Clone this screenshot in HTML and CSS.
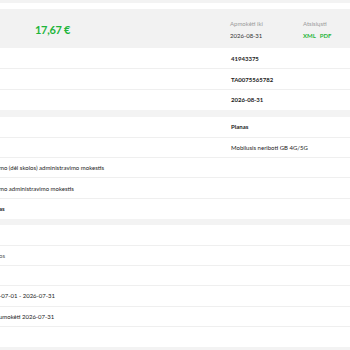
FILE: index.html
```html
<!DOCTYPE html>
<html lang="lt">
<head>
<meta charset="utf-8">
<title>Sąskaita</title>
<link rel="stylesheet" href="styles.css">
</head>
<body>
<div class="topbar"></div>
<section class="summary">
  <div class="price">17,67 €</div>
  <div class="meta">
    <div class="meta-label">Apmokėti iki</div>
    <div class="meta-value">2026-08-31</div>
  </div>
  <div class="meta">
    <div class="meta-label">Atsisiųsti</div>
    <div class="links"><span>XML</span><span>PDF</span></div>
  </div>
</section>

<div class="table first">
  <div class="row"><div class="cell-left"></div><div class="cell-right strong">41943375</div></div>
  <div class="row"><div class="cell-left"></div><div class="cell-right strong">TA0075565782</div></div>
  <div class="row last"><div class="cell-left"></div><div class="cell-right strong">2026-08-31</div></div>
</div>
<div class="band"></div>
<div class="table">
  <div class="row"><div class="cell-left"></div><div class="cell-right strong">Planas</div></div>
  <div class="row"><div class="cell-left"></div><div class="cell-right">Mobilusis neriboti GB 4G/5G</div></div>
  <div class="row"><div class="cell-left cut">mo (dėl skolos) administravimo mokestis</div><div class="cell-right"></div></div>
  <div class="row"><div class="cell-left cut">mo administravimo mokestis</div><div class="cell-right"></div></div>
  <div class="row last"><div class="cell-left cut strong">as</div><div class="cell-right"></div></div>
</div>
<div class="band small"></div>
<div class="table">
  <div class="row"><div class="cell-left"></div><div class="cell-right"></div></div>
  <div class="row"><div class="cell-left cut muted">os</div><div class="cell-right"></div></div>
  <div class="row"><div class="cell-left"></div><div class="cell-right"></div></div>
  <div class="row"><div class="cell-left cut">-07-01 - 2026-07-31</div><div class="cell-right"></div></div>
  <div class="row"><div class="cell-left cut">umokėti 2026-07-31</div><div class="cell-right"></div></div>
  <div class="row last"><div class="cell-left"></div><div class="cell-right"></div></div>
</div>
<div class="band"></div>
</body>
</html>
```
FILE: styles.css
```css
html, body {
  margin: 0;
  padding: 0;
  background: #ffffff;
  overflow: hidden;
}
body {
  font-family: Lato, "Noto Sans", "DejaVu Sans", sans-serif;
  color: #222222;
  font-size: 6px;
}
.topbar {
  height: 3px;
  background: #f3f3f3;
  margin-bottom: 6px;
}
.summary {
  height: 39px;
  background: #f2f2f2;
  display: grid;
  grid-template-columns: 230px 73px 1fr;
  align-items: center;
}
.price {
  padding-left: 35px;
  padding-top: 2px;
  font-size: 11px;
  font-weight: 700;
  color: #1fb53b;
  letter-spacing: -0.3px;
}
.meta {
  display: flex;
  flex-direction: column;
  gap: 5px;
  padding-top: 2px;
}
.meta-label {
  color: #9a9a9a;
  font-size: 6px;
}
.meta-value {
  color: #333333;
  font-size: 6px;
}
.links {
  display: flex;
  gap: 4px;
  color: #1fb53b;
  font-weight: 700;
  font-size: 6px;
}
.table {
  display: flex;
  flex-direction: column;
}
.table.first {
  margin-top: 1px;
}
.row {
  height: 20.4px;
  box-sizing: border-box;
  border-bottom: 1px solid #efefef;
  display: grid;
  grid-template-columns: 231px 1fr;
  align-items: center;
}
.row.last {
  border-bottom: none;
}
.cell-left {
  white-space: nowrap;
  overflow: hidden;
}
.cut {
  margin-left: -1px;
}
.strong {
  font-weight: 700;
}
.muted {
  color: #555555;
}
.band {
  height: 7px;
  background: #f3f3f3;
}
.band.small {
  height: 6px;
}
```
